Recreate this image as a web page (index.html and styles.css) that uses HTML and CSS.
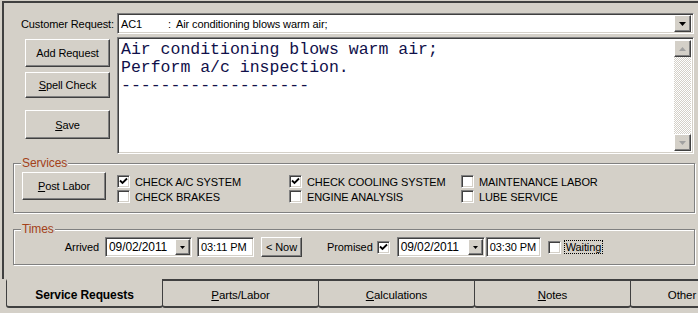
FILE: index.html
```html
<!DOCTYPE html>
<html lang="en">
<head>
  <meta charset="UTF-8">
  <meta name="viewport" content="width=device-width, initial-scale=1.0">
  <title>Service Request</title>
  <link rel="stylesheet" href="styles.css">
</head>
<body>

  <div class="panel">
    <div class="request">
      <span class="request-label">Customer Request:</span>
      <div class="field combo">
        <span class="combo-code">AC1</span>
        <span class="combo-sep">:</span>
        <span>Air conditioning blows warm air;</span>
        <span class="raised drop-btn">
          <svg width="7" height="4" viewBox="0 0 7 4"><path d="M0 0h7l-3.5 4z" fill="#000"/></svg>
        </span>
      </div>

      <div class="actions">
        <button class="btn btn-add">Add Request</button>
        <button class="btn btn-spell"><u>S</u>pell Check</button>
        <button class="btn btn-save"><u>S</u>ave</button>
      </div>

      <div class="field memo">
        <div class="memo-text">Air conditioning blows warm air;
Perform a/c inspection.
-------------------</div>
        <div class="scrollbar">
          <span class="raised scroll-btn">
            <svg width="7" height="4" viewBox="0 0 7 4"><path d="M3.5 0l3.5 4h-7z" fill="#a0a0a0"/></svg>
          </span>
          <span class="scroll-track"></span>
          <span class="raised scroll-btn">
            <svg width="7" height="4" viewBox="0 0 7 4"><path d="M0 0h7l-3.5 4z" fill="#a0a0a0"/></svg>
          </span>
        </div>
      </div>
    </div>

    <fieldset class="group">
      <legend>Services</legend>
      <div class="services-body">
        <button class="btn btn-post"><u>P</u>ost Labor</button>
        <div class="service-list">
          <div class="check-row"><span class="check checked"><svg width="9" height="9" viewBox="0 0 9 9"><path d="M1 3.5l2.5 2.5l4.5-4.5" fill="none" stroke="#000" stroke-width="1.8"/></svg></span>CHECK A/C SYSTEM</div>
          <div class="check-row"><span class="check"></span>CHECK BRAKES</div>
          <div class="check-row"><span class="check checked"><svg width="9" height="9" viewBox="0 0 9 9"><path d="M1 3.5l2.5 2.5l4.5-4.5" fill="none" stroke="#000" stroke-width="1.8"/></svg></span>CHECK COOLING SYSTEM</div>
          <div class="check-row"><span class="check"></span>ENGINE ANALYSIS</div>
          <div class="check-row"><span class="check"></span>MAINTENANCE LABOR</div>
          <div class="check-row"><span class="check"></span>LUBE SERVICE</div>
        </div>
      </div>
    </fieldset>

    <fieldset class="group times">
      <legend>Times</legend>
      <div class="times-body">
        <span class="times-label">Arrived</span>
        <div class="field date">
          <span>09/02/2011</span>
          <span class="raised date-btn">
            <svg width="5" height="3" viewBox="0 0 5 3"><path d="M0 0h5l-2.5 3z" fill="#000"/></svg>
          </span>
        </div>
        <div class="field time time-arrived">03:11 PM</div>
        <button class="btn btn-now">&lt; Now</button>
        <span class="promised-label">Promised</span>
        <span class="check checked promised-check"><svg width="9" height="9" viewBox="0 0 9 9"><path d="M1 3.5l2.5 2.5l4.5-4.5" fill="none" stroke="#000" stroke-width="1.8"/></svg></span>
        <div class="field date date-promised">
          <span>09/02/2011</span>
          <span class="raised date-btn">
            <svg width="5" height="3" viewBox="0 0 5 3"><path d="M0 0h5l-2.5 3z" fill="#000"/></svg>
          </span>
        </div>
        <div class="field time time-promised">03:30 PM</div>
        <span class="check waiting-check"></span>
        <span class="waiting">Waiting</span>
      </div>
    </fieldset>
  </div>

  <div class="tabs">
    <div class="tab active">Service Requests</div>
    <div class="tab"><span><u>P</u>arts/Labor</span></div>
    <div class="tab"><span><u>C</u>alculations</span></div>
    <div class="tab"><span><u>N</u>otes</span></div>
    <div class="tab tab-other"><span>Other</span></div>
  </div>

</body>
</html>
```

FILE: styles.css
```css
* {
  box-sizing: border-box;
}

body {
  margin: 0;
  width: 698px;
  height: 313px;
  overflow: hidden;
  background: #d4d0c8;
  font-family: "Liberation Sans", Arial, sans-serif;
  font-size: 11px;
  letter-spacing: -0.1px;
  color: #000;
}

/* main panel of the tab control */
.panel {
  margin: 1px 0 0 2px;
  height: 278px;
  border-top: 2px solid #404040;
  border-left: 2px solid #404040;
  padding: 0 3px 0 9px;
}

/* shared 3d borders */
.field {
  background: #fff;
  border: 1px solid;
  border-color: #808080 #fff #fff #808080;
  box-shadow: inset 1px 1px 0 #404040, inset -1px -1px 0 #d4d0c8;
  white-space: nowrap;
}

.raised,
.btn {
  background: #d4d0c8;
  border: 1px solid;
  border-color: #fff #404040 #404040 #fff;
  box-shadow: inset -1px -1px 0 #808080;
}

.btn {
  font: inherit;
  letter-spacing: inherit;
  color: #000;
  padding: 0;
  white-space: nowrap;
}

.raised {
  display: flex;
  align-items: center;
  justify-content: center;
}

/* customer request block */
.request {
  display: grid;
  grid-template-columns: 85px 1fr;
  column-gap: 7px;
  row-gap: 3px;
  padding: 10px 1px 0 12px;
}

.request-label {
  justify-self: end;
  align-self: center;
  margin-right: -4px;
  white-space: nowrap;
}

.combo {
  height: 21px;
  display: flex;
  align-items: center;
  padding: 0 2px 0 3px;
}

.combo-code {
  width: 47px;
}

.combo-sep {
  margin-right: 5px;
}

.drop-btn {
  margin-left: auto;
  width: 17px;
  height: 17px;
}

.actions {
  display: flex;
  flex-direction: column;
}

.btn-add {
  margin-top: 2px;
  height: 28px;
}

.btn-spell {
  margin-top: 5px;
  height: 26px;
}

.btn-save {
  margin-top: 12px;
  height: 29px;
}

.memo {
  height: 117px;
  display: flex;
  padding: 2px;
}

.memo-text {
  flex: 1;
  padding: 1px 0 0 1px;
  font-family: "Liberation Mono", "Courier New", monospace;
  font-size: 16.5px;
  letter-spacing: 0;
  line-height: 18px;
  color: #10104a;
  white-space: pre;
}

.scrollbar {
  width: 17px;
  display: flex;
  flex-direction: column;
}

.scroll-btn {
  height: 17px;
}

.scroll-track {
  flex: 1;
  background: repeating-conic-gradient(#fff 0 25%, #d4d0c8 0 50%) 0 0 / 2px 2px;
}

/* group boxes */
.group {
  margin: 2px 0 0;
  padding: 0;
  min-width: 0;
  border: 1px solid #808080;
  box-shadow: 1px 1px 0 #fff, inset 1px 1px 0 #fff;
}

.group legend {
  margin-left: 7px;
  padding: 0 1px;
  line-height: 14px;
  font-size: 12px;
  color: #a3411a;
  background: #d4d0c8;
}

.services-body {
  display: flex;
  padding: 2px 0 8px 8px;
}

.btn-post {
  width: 84px;
  height: 28px;
  margin-right: 11px;
}

.service-list {
  display: grid;
  grid-template-columns: repeat(3, 172px);
  grid-template-rows: 15px 15px;
  grid-auto-flow: column;
  margin-top: 2px;
}

.check-row {
  display: flex;
  align-items: center;
  gap: 5px;
  white-space: nowrap;
}

.check {
  width: 13px;
  height: 13px;
  flex: none;
  display: flex;
  align-items: center;
  justify-content: center;
  background: #fff;
  border: 1px solid;
  border-color: #808080 #fff #fff #808080;
  box-shadow: inset 1px 1px 0 #404040, inset -1px -1px 0 #d4d0c8;
}

/* times */
.times {
  margin-top: 9px;
}

.times-body {
  display: flex;
  align-items: center;
  padding: 1px 0 7px 0;
}

.times-label {
  width: 85px;
  text-align: right;
  margin-right: 6px;
}

.date {
  width: 87px;
  height: 20px;
  display: flex;
  align-items: center;
  padding: 0 1px 0 3px;
  font-size: 12px;
}

.date-btn {
  margin-left: auto;
  width: 15px;
  height: 16px;
}

.time {
  height: 20px;
  display: flex;
  align-items: center;
  padding-left: 3px;
}

.time-arrived {
  width: 57px;
  margin-left: 5px;
}

.btn-now {
  width: 41px;
  height: 20px;
  margin-left: 7px;
}

.promised-label {
  margin-left: 25px;
}

.promised-check {
  margin-left: 4px;
}

.date-promised {
  width: 88px;
  margin-left: 7px;
}

.time-promised {
  width: 55px;
  margin-left: 1px;
}

.waiting-check {
  margin-left: 7px;
}

.waiting {
  margin-left: 4px;
  padding: 0 1px;
  outline: 1px dotted #000;
}

/* bottom tabs */
.tabs {
  display: flex;
  padding-left: 6px;
}

.tab {
  width: 157px;
  height: 29px;
  flex: none;
  display: flex;
  align-items: center;
  justify-content: center;
  padding-top: 2px;
  border: 1px solid #404040;
  border-top-width: 2px;
  border-bottom-width: 2px;
  border-radius: 0 0 3px 3px;
  font-size: 11.5px;
}

.tab + .tab {
  margin-left: -1px;
}

.tab.active {
  border-top-color: transparent;
  font-weight: bold;
  font-size: 12px;
}

.tab-other {
  width: 104px;
}
```
